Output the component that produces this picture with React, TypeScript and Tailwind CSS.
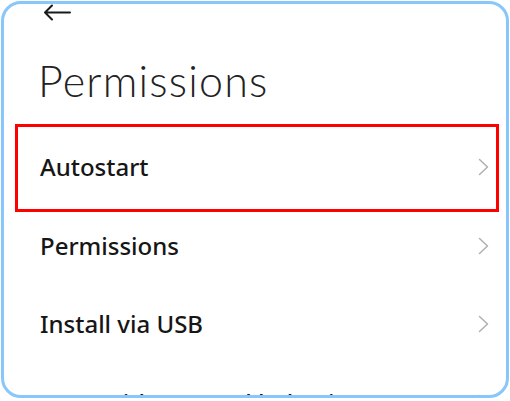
const rows = ['Autostart', 'Permissions', 'Install via USB', 'Apps with unusual behavior']

function Chevron() {
  return (
    <svg width="11" height="18" viewBox="0 0 11 18" fill="none" stroke="#b0b0b0" strokeWidth="1.5" strokeLinecap="round" strokeLinejoin="round">
      <path d="M1.5 1.5L9.5 9l-8 7.5" />
    </svg>
  )
}

export default function App() {
  return (
    <div className="w-[510px] h-[401px] bg-white pt-px pl-px">
      <div className="w-[508px] h-[397px] rounded-[20px] border-[3px] border-[#88c7fb] overflow-hidden bg-white">
        {/* back arrow */}
        <div className="h-[17px] pl-[38px] flex items-start">
          <svg width="30" height="17" viewBox="0 0 30 17" fill="none" stroke="#1a1a1a" strokeWidth="2" strokeLinecap="round" strokeLinejoin="round">
            <path d="M28 8.5H3M10 1.5L3 8.5l7 7" />
          </svg>
        </div>

        <h1 className="mt-[33px] pl-[34px] text-[43px] leading-[54px] font-light tracking-[1.2px] text-[#222] font-['Lato',sans-serif]">
          Permissions
        </h1>

        <div className="mt-[20px]">
          {rows.map((label, i) => (
            <div key={label} className="relative h-[78.5px] flex items-center justify-between pl-[36px] pr-[17px]">
              <span className="text-[24px] font-medium text-[#161616] font-['Noto_Sans',sans-serif]">{label}</span>
              <Chevron />
              {i === 0 && (
                <div className="absolute left-[11px] right-[7px] -top-[4px] -bottom-[5px] border-[3px] border-[#ff0000] pointer-events-none" />
              )}
            </div>
          ))}
        </div>
      </div>
    </div>
  )
}
